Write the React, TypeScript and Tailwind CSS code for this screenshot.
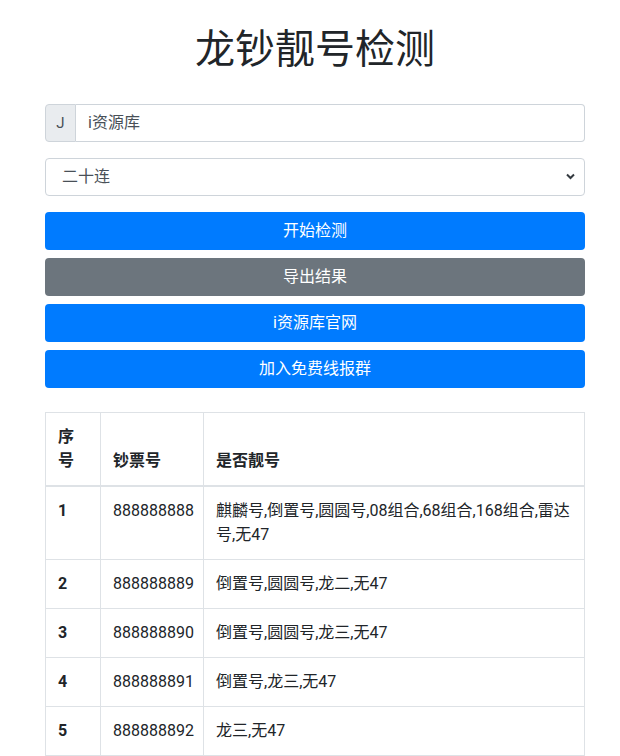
import React, { useState } from 'react';

const rows = [
  { id: 1, code: '888888888', result: '麒麟号,倒置号,圆圆号,08组合,68组合,168组合,雷达号,无47' },
  { id: 2, code: '888888889', result: '倒置号,圆圆号,龙二,无47' },
  { id: 3, code: '888888890', result: '倒置号,圆圆号,龙三,无47' },
  { id: 4, code: '888888891', result: '倒置号,龙三,无47' },
  { id: 5, code: '888888892', result: '龙三,无47' },
];

function App() {
  const [prefix, setPrefix] = useState('i资源库');
  const [mode, setMode] = useState('二十连');

  return (
    <div className="min-h-screen bg-white text-[#212529] font-['Roboto','Noto_Sans_CJK_SC',sans-serif] text-base leading-6">
      <div className="ml-[45px] w-[540px]">
        <h1 className="pt-[26px] mb-[30px] text-center text-[40px] leading-[48px] font-normal">
          龙钞靓号检测
        </h1>

        {/* prefix input */}
        <div className="flex h-[38px] mb-4">
          <span className="flex items-center justify-center w-[31px] shrink-0 bg-[#e9ecef] border border-[#ced4da] rounded-l text-[#495057] text-[15px]">
            J
          </span>
          <input
            value={prefix}
            onChange={e => setPrefix(e.target.value)}
            className="flex-1 min-w-0 px-3 border border-l-0 border-[#ced4da] rounded-r text-[#495057] outline-none"
          />
        </div>

        {/* mode select */}
        <div className="relative h-[38px] mb-4">
          <select
            value={mode}
            onChange={e => setMode(e.target.value)}
            className="w-full h-full appearance-none pl-4 pr-7 border border-[#ced4da] rounded bg-white text-[#495057] outline-none"
          >
            <option>二十连</option>
            <option>十连</option>
            <option>五连</option>
          </select>
          <svg className="absolute right-[10px] top-[15px] pointer-events-none" width="9" height="7" viewBox="0 0 9 7">
            <path d="M1 1.5 L4.5 5 L8 1.5" fill="none" stroke="#343a40" strokeWidth="2" />
          </svg>
        </div>

        <div className="flex flex-col gap-2">
          <button className="h-[38px] rounded bg-[#007bff] text-white">开始检测</button>
          <button className="h-[38px] rounded bg-[#6c757d] text-white">导出结果</button>
          <button className="h-[38px] rounded bg-[#007bff] text-white">i资源库官网</button>
          <button className="h-[38px] rounded bg-[#007bff] text-white">加入免费线报群</button>
        </div>

        <table className="mt-6 w-full table-fixed border-collapse border border-[#dee2e6]">
          <thead>
            <tr>
              <th className="w-[55px] p-3 align-bottom text-left font-bold border border-[#dee2e6] border-b-2">序号</th>
              <th className="w-[103px] p-3 align-bottom text-left font-bold border border-[#dee2e6] border-b-2">钞票号</th>
              <th className="p-3 align-bottom text-left font-bold border border-[#dee2e6] border-b-2">是否靓号</th>
            </tr>
          </thead>
          <tbody>
            {rows.map(r => (
              <tr key={r.id}>
                <th className="p-3 align-top text-left font-bold border border-[#dee2e6]">{r.id}</th>
                <td className="p-3 align-top border border-[#dee2e6]">{r.code}</td>
                <td className="p-3 align-top border border-[#dee2e6]">{r.result}</td>
              </tr>
            ))}
          </tbody>
        </table>
      </div>
    </div>
  );
}

export default App;
